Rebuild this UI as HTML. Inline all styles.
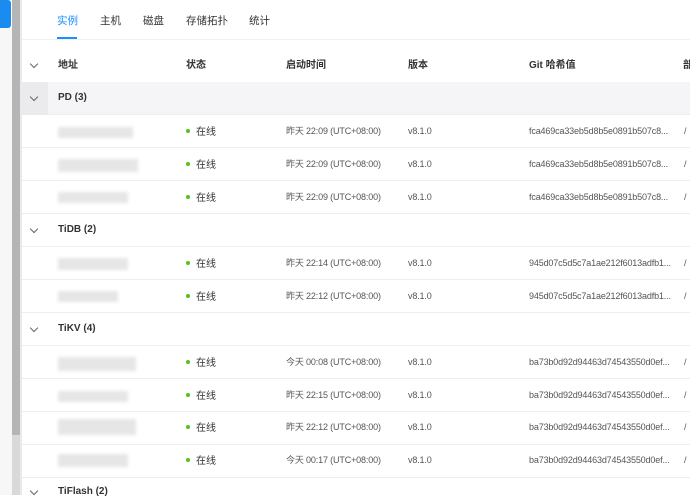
<!DOCTYPE html><html><head><meta charset="utf-8"><style>
body{margin:0;width:690px;height:495px;overflow:hidden;background:#fff;font-family:"Liberation Sans","Noto Sans CJK SC",sans-serif;font-size:10px;color:#333;position:relative}
.a{position:absolute;white-space:nowrap;line-height:12px}
.row{position:absolute;left:22px;right:0;border-bottom:1px solid #eeeeee}
.g{background:#f5f4f6}
.car{position:absolute;left:31px;width:5px;height:5px;border-right:1px solid #666;border-bottom:1px solid #666;transform:rotate(45deg)}
.blur{position:absolute;left:58px;height:11px;background:#e6e6e6;filter:blur(1.5px)}
.dot{position:absolute;left:186px;width:4px;height:4px;border-radius:50%;background:#52c41a}
.t{color:#555;font-size:9px;letter-spacing:-0.15px}
.s{margin-top:2px}
</style></head><body>
<div class="a" style="left:0;top:0;width:11px;height:28px;background:#1a8cf0;border-radius:0 3px 3px 0"></div>
<div class="a" style="left:0;top:28px;width:12px;height:467px;background:#f7f7f7"></div>
<div class="a" style="left:12px;top:0;width:8px;height:435px;background:#b5b5b5"></div>
<div class="a" style="left:12px;top:435px;width:8px;height:60px;background:#d9d9d9"></div>
<div class="a" style="left:20px;top:0;width:2px;height:495px;background:#eaeaea"></div>
<div class="a" style="left:57px;top:15px;font-size:10.5px;color:#1890ff">实例</div>
<div class="a" style="left:100px;top:15px;font-size:10.5px">主机</div>
<div class="a" style="left:143px;top:15px;font-size:10.5px">磁盘</div>
<div class="a" style="left:186px;top:15px;font-size:10.5px">存储拓扑</div>
<div class="a" style="left:249px;top:15px;font-size:10.5px">统计</div>
<div class="a" style="left:57px;top:37px;width:20px;height:2px;background:#1890ff"></div>
<div class="a" style="left:22px;top:39px;width:668px;height:1px;background:#f0f0f0"></div>
<div class="car" style="top:61px"></div>
<div class="a" style="left:58px;top:60px;font-weight:bold">地址</div>
<div class="a" style="left:186px;top:60px;font-weight:bold">状态</div>
<div class="a" style="left:286px;top:60px;font-weight:bold">启动时间</div>
<div class="a" style="left:408px;top:60px;font-weight:bold">版本</div>
<div class="a" style="left:529px;top:60px;font-weight:bold">Git 哈希值</div>
<div class="a" style="left:683px;top:60px;font-weight:bold">部</div>

<div class="row g" style="top:82px;height:32px"></div>
<div class="a" style="left:22px;top:82px;width:26px;height:33px;background:#ebeaec"></div>
<div class="car" style="top:94px"></div>
<div class="a" style="left:58px;top:92px;font-weight:bold">PD (3)</div>

<div class="row" style="top:115px;height:32px"></div>
<div class="row" style="top:148px;height:32px"></div>
<div class="row" style="top:181px;height:32px"></div>
<div class="row" style="top:214px;height:32px"></div>
<div class="car" style="top:226px"></div>
<div class="a" style="left:58px;top:224px;font-weight:bold">TiDB (2)</div>
<div class="row" style="top:247px;height:32px"></div>
<div class="row" style="top:280px;height:32px"></div>
<div class="row" style="top:313px;height:32px"></div>
<div class="car" style="top:325px"></div>
<div class="a" style="left:58px;top:323px;font-weight:bold">TiKV (4)</div>
<div class="row" style="top:346px;height:32px"></div>
<div class="row" style="top:379px;height:32px"></div>
<div class="row" style="top:412px;height:32px"></div>
<div class="row" style="top:445px;height:32px"></div>
<div class="car" style="top:488px"></div>
<div class="a" style="left:58px;top:486px;font-weight:bold">TiFlash (2)</div>

<div class="blur" style="top:127px;width:75px"></div>
<div class="blur" style="top:159px;width:80px;height:13px"></div>
<div class="blur" style="top:192px;width:70px"></div>
<div class="blur" style="top:258px;width:70px;height:12px"></div>
<div class="blur" style="top:291px;width:60px"></div>
<div class="blur" style="top:357px;width:78px;height:14px"></div>
<div class="blur" style="top:391px;width:70px"></div>
<div class="blur" style="top:419px;width:78px;height:16px"></div>
<div class="blur" style="top:454px;width:70px;height:13px"></div>

<div class="dot" style="top:129px"></div><div class="a s" style="left:196px;top:125px">在线</div>
<div class="dot" style="top:162px"></div><div class="a s" style="left:196px;top:158px">在线</div>
<div class="dot" style="top:195px"></div><div class="a s" style="left:196px;top:191px">在线</div>
<div class="dot" style="top:261px"></div><div class="a s" style="left:196px;top:257px">在线</div>
<div class="dot" style="top:294px"></div><div class="a s" style="left:196px;top:290px">在线</div>
<div class="dot" style="top:360px"></div><div class="a s" style="left:196px;top:356px">在线</div>
<div class="dot" style="top:393px"></div><div class="a s" style="left:196px;top:389px">在线</div>
<div class="dot" style="top:425px"></div><div class="a s" style="left:196px;top:421px">在线</div>
<div class="dot" style="top:458px"></div><div class="a s" style="left:196px;top:454px">在线</div>

<div class="a t" style="left:286px;top:125px">昨天 22:09 (UTC+08:00)</div>
<div class="a t" style="left:286px;top:158px">昨天 22:09 (UTC+08:00)</div>
<div class="a t" style="left:286px;top:191px">昨天 22:09 (UTC+08:00)</div>
<div class="a t" style="left:286px;top:257px">昨天 22:14 (UTC+08:00)</div>
<div class="a t" style="left:286px;top:290px">昨天 22:12 (UTC+08:00)</div>
<div class="a t" style="left:286px;top:356px">今天 00:08 (UTC+08:00)</div>
<div class="a t" style="left:286px;top:389px">昨天 22:15 (UTC+08:00)</div>
<div class="a t" style="left:286px;top:421px">昨天 22:12 (UTC+08:00)</div>
<div class="a t" style="left:286px;top:454px">今天 00:17 (UTC+08:00)</div>

<div class="a t" style="left:408px;top:125px">v8.1.0</div>
<div class="a t" style="left:408px;top:158px">v8.1.0</div>
<div class="a t" style="left:408px;top:191px">v8.1.0</div>
<div class="a t" style="left:408px;top:257px">v8.1.0</div>
<div class="a t" style="left:408px;top:290px">v8.1.0</div>
<div class="a t" style="left:408px;top:356px">v8.1.0</div>
<div class="a t" style="left:408px;top:389px">v8.1.0</div>
<div class="a t" style="left:408px;top:421px">v8.1.0</div>
<div class="a t" style="left:408px;top:454px">v8.1.0</div>

<div class="a t" style="left:529px;top:125px">fca469ca33eb5d8b5e0891b507c8...</div>
<div class="a t" style="left:529px;top:158px">fca469ca33eb5d8b5e0891b507c8...</div>
<div class="a t" style="left:529px;top:191px">fca469ca33eb5d8b5e0891b507c8...</div>
<div class="a t" style="left:529px;top:257px">945d07c5d5c7a1ae212f6013adfb1...</div>
<div class="a t" style="left:529px;top:290px">945d07c5d5c7a1ae212f6013adfb1...</div>
<div class="a t" style="left:529px;top:356px">ba73b0d92d94463d74543550d0ef...</div>
<div class="a t" style="left:529px;top:389px">ba73b0d92d94463d74543550d0ef...</div>
<div class="a t" style="left:529px;top:421px">ba73b0d92d94463d74543550d0ef...</div>
<div class="a t" style="left:529px;top:454px">ba73b0d92d94463d74543550d0ef...</div>

<div class="a t" style="left:684px;top:125px">/</div>
<div class="a t" style="left:684px;top:158px">/</div>
<div class="a t" style="left:684px;top:191px">/</div>
<div class="a t" style="left:684px;top:257px">/</div>
<div class="a t" style="left:684px;top:290px">/</div>
<div class="a t" style="left:684px;top:356px">/</div>
<div class="a t" style="left:684px;top:389px">/</div>
<div class="a t" style="left:684px;top:421px">/</div>
<div class="a t" style="left:684px;top:454px">/</div>
</body></html>
